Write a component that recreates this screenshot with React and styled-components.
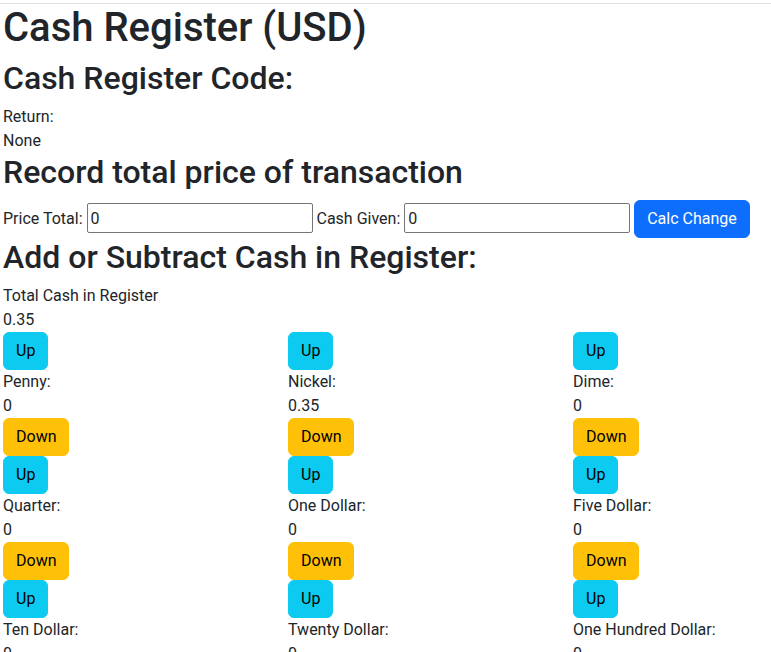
import React from "react";
import styled, { createGlobalStyle, css } from "styled-components";

const GlobalStyle = createGlobalStyle`
  html, body {
    margin: 0;
    padding: 0;
    background: #fff;
  }
  body {
    font-family: Roboto, "Liberation Sans", sans-serif;
    font-size: 16px;
    line-height: 24px;
    color: #212529;
  }
  *, *::before, *::after { box-sizing: border-box; }
`;

const TopRule = styled.div`
  margin-top: 3px;
  border-top: 1px solid #dee2e6;
`;

const Page = styled.main`
  padding: 0 3px;
`;

const headingStyles = {
  1: css`
    font-size: 40px;
    line-height: 47px;
  `,
  2: css`
    font-size: 32px;
    line-height: 1.2;
  `,
  3: css`
    font-size: 32px;
    line-height: 1.2;
  `,
};

const Heading = styled.h1`
  margin: 0 0 8px;
  font-weight: 500;
  color: #212529;
  ${(p) => headingStyles[p.$level]}
`;

const Line = styled.div`
  line-height: 24px;
`;

const FormLine = styled.div`
  line-height: 24px;
`;

const Input = styled.input`
  width: 226px;
  height: 30px;
  border: 1px solid #767676;
  border-radius: 2px;
  padding: 1px 3px;
  font: inherit;
  line-height: 24px;
  color: #212529;
  vertical-align: baseline;
`;

const variants = {
  primary: css`
    background: #0d6efd;
    border-color: #0d6efd;
    color: #fff;
  `,
  info: css`
    background: #0dcaf0;
    border-color: #0dcaf0;
    color: #000;
  `,
  warning: css`
    background: #ffc107;
    border-color: #ffc107;
    color: #000;
  `,
};

const Button = styled.button`
  display: inline-block;
  font-family: inherit;
  font-size: 16px;
  font-weight: 400;
  line-height: 24px;
  padding: 6px 12px;
  border: 1px solid transparent;
  border-radius: 6px;
  cursor: pointer;
  ${(p) => variants[p.$variant]}
`;

const Grid = styled.div`
  display: grid;
  grid-template-columns: repeat(3, 285px);
`;

const Cell = styled.div`
  display: flex;
  flex-direction: column;
  align-items: flex-start;
`;

const denominations = [
  { name: "Penny", value: "0" },
  { name: "Nickel", value: "0.35" },
  { name: "Dime", value: "0" },
  { name: "Quarter", value: "0" },
  { name: "One Dollar", value: "0" },
  { name: "Five Dollar", value: "0" },
  { name: "Ten Dollar", value: "0" },
  { name: "Twenty Dollar", value: "0" },
  { name: "One Hundred Dollar", value: "0" },
];

export default function App() {
  return (
    <>
      <GlobalStyle />
      <TopRule />
      <Page>
        <Heading $level={1}>Cash Register (USD)</Heading>
        <Heading as="h2" $level={2}>Cash Register Code:</Heading>
        <Line>Return:</Line>
        <Line>None</Line>
        <Heading as="h3" $level={3}>Record total price of transaction</Heading>
        <FormLine>
          Price Total: <Input defaultValue="0" /> Cash Given:{" "}
          <Input defaultValue="0" /> <Button $variant="primary">Calc Change</Button>
        </FormLine>
        <Heading as="h3" $level={3}>Add or Subtract Cash in Register:</Heading>
        <Line>Total Cash in Register</Line>
        <Line>0.35</Line>
        <Grid>
          {denominations.map((d) => (
            <Cell key={d.name}>
              <Button $variant="info">Up</Button>
              <Line>{d.name}:</Line>
              <Line>{d.value}</Line>
              <Button $variant="warning">Down</Button>
            </Cell>
          ))}
        </Grid>
      </Page>
    </>
  );
}
